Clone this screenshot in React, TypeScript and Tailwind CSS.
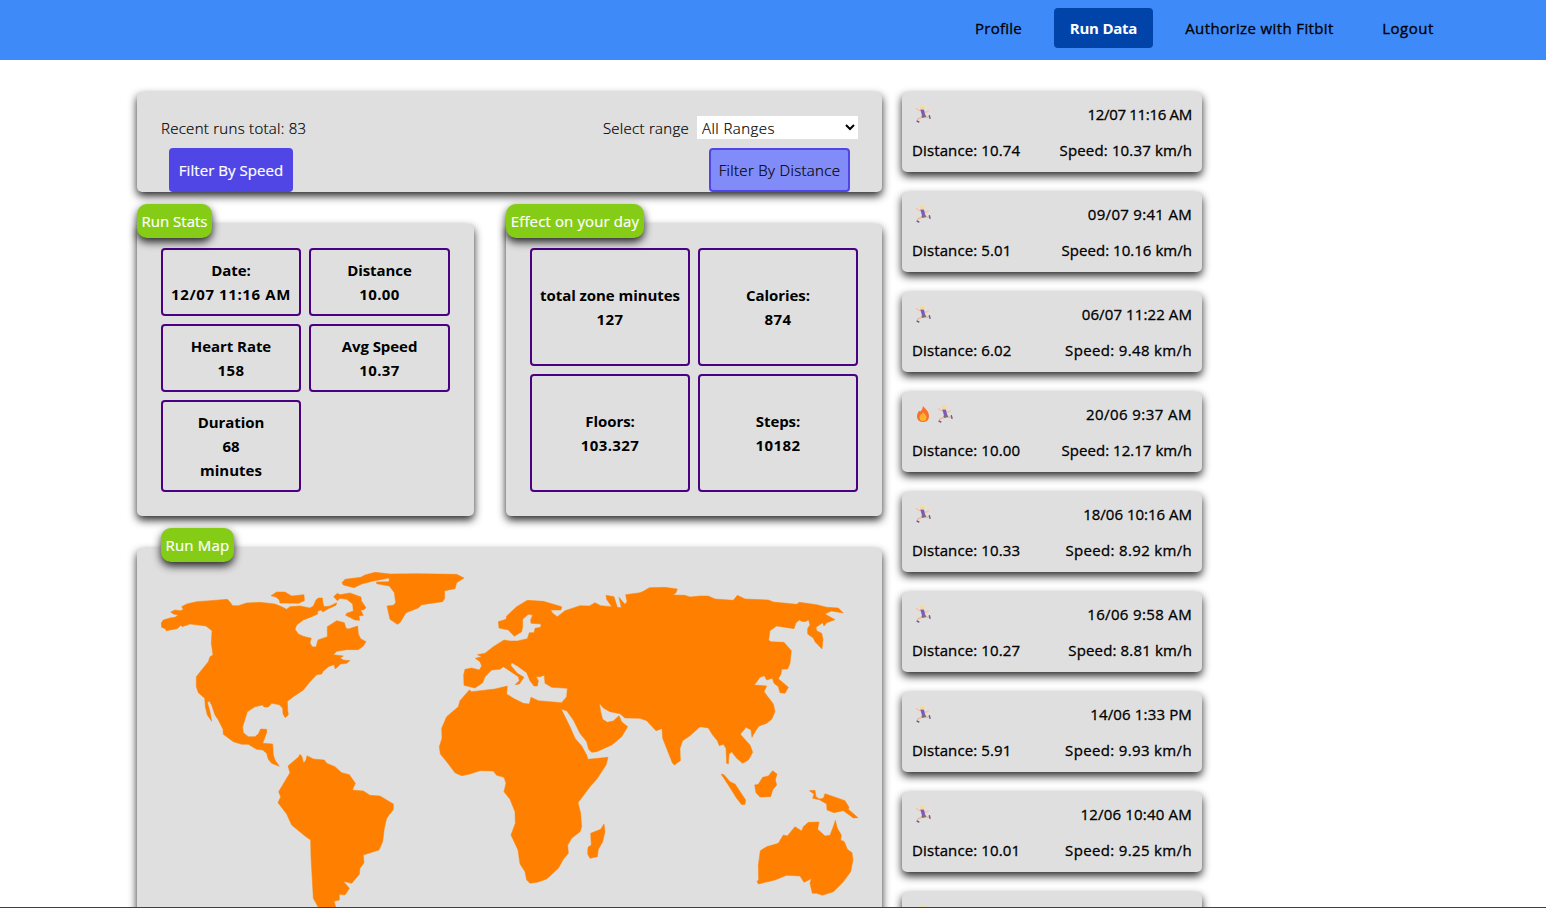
import type { ReactNode } from "react";

const SHADOW = "shadow-[0_4px_8px_rgba(0,0,0,0.85)]";
const MEDIUM = "[-webkit-text-stroke:0.3px_currentColor]";
const SEMILIGHT = "[-webkit-text-stroke:0.2px_currentColor]";

type Run = { date: string; distance: string; speed: string; hot?: boolean; dateTracking: string; speedTracking: string };

const runs: Run[] = [
  { date: "12/07 11:16 AM", distance: "10.74", speed: "10.37", dateTracking: "tracking-[-0.3px]", speedTracking: "tracking-[0.15px]" },
  { date: "09/07 9:41 AM", distance: "5.01", speed: "10.16", dateTracking: "tracking-[0.3px]", speedTracking: "tracking-[0.03px]" },
  { date: "06/07 11:22 AM", distance: "6.02", speed: "9.48", dateTracking: "tracking-[0.1px]", speedTracking: "tracking-[0.35px]" },
  { date: "20/06 9:37 AM", distance: "10.00", speed: "12.17", hot: true, dateTracking: "tracking-[0.45px]", speedTracking: "tracking-[0.03px]" },
  { date: "18/06 10:16 AM", distance: "10.33", speed: "8.92", dateTracking: "tracking-[0px]", speedTracking: "tracking-[0.32px]" },
  { date: "16/06 9:58 AM", distance: "10.27", speed: "8.81", dateTracking: "tracking-[0.35px]", speedTracking: "tracking-[0.15px]" },
  { date: "14/06 1:33 PM", distance: "5.91", speed: "9.93", dateTracking: "tracking-[0.15px]", speedTracking: "tracking-[0.35px]" },
  { date: "12/06 10:40 AM", distance: "10.01", speed: "9.25", dateTracking: "tracking-[0.2px]", speedTracking: "tracking-[0.35px]" },
];

function Runner() {
  return (
    <svg width="22" height="20" viewBox="0 0 22 20" fill="none" strokeLinecap="round" strokeLinejoin="round" aria-hidden="true">
      <path d="M9.2 6.6 L6.4 6.2 L4.6 4.6 M12.4 7.4 L14.2 8.4 L16.4 6.6" stroke="#f0bda0" strokeWidth="1.1" />
      <path d="M13.2 12.4 L15.2 13.4 L17 12.8 M10.6 12.6 L8.8 14 L6 14.6 L5.4 17" stroke="#efb797" strokeWidth="1.4" />
      <path d="M17.4 11.6 L18 14.4 M5 17.2 L6.8 18" stroke="#6b5a96" strokeWidth="1.4" />
      <path d="M8.3 5.6 L11.8 5.2 L13.2 10.8 L10 11.6 Z" fill="#8158b8" />
      <path d="M10 10.9 L13.3 10.4 L14.3 13 L10.6 14 L9.4 12.8 Z" fill="#737373" />
      <circle cx="10.3" cy="3.7" r="1.9" fill="#f7d0b0" />
      <path d="M8 2.4 L10 1.2 L12.4 2 L12.8 4.6 L11.4 5.4 L10.6 3.2 L8.2 3.4 Z" fill="#f5df92" />
    </svg>
  );
}

function Flame() {
  return (
    <svg width="22" height="20" viewBox="0 0 22 20" aria-hidden="true">
      <path d="M10.8 2 C12.4 4 17.2 7 17 12.4 C16.8 16.2 14 18 11 18 C8 18 5.1 16.2 5 12.4 C4.9 10 6.2 8 7.4 6.8 L8.2 7.6 C9.8 6 11 4.6 10.8 2 Z" fill="#f8702c" />
      <path d="M11 8 C11.8 9.4 14.5 10.8 14.5 13.6 C14.5 16.2 12.8 17.2 11 17.2 C9.2 17.2 7.5 16 7.5 13.6 C7.5 12 8.4 11.2 9 10.6 C10 10 10.8 9.2 11 8 Z" fill="#ffb02e" />
    </svg>
  );
}

function WorldMap() {
  return (
    <svg width="697" height="344" viewBox="0 0 697 344" fill="#ff8000" stroke="#ff8000" strokeWidth="1.5" strokeLinejoin="round" className="block" aria-label="World map">
      <g transform="translate(-11 -12) scale(0.33333)">
        <path d="M33 190 40 180 60 174 75 172 85 165 70 162 62 156 75 150 92 152 100 148 95 140 110 132 140 125 180 122 232 118 240 126 248 137 265 137 290 129 330 127 375 132 395 140 410 148 420 140 450 138 480 144 490 138 498 120 505 114 517 114 519 130 522 140 540 138 560 128 558 136 535 146 518 156 514 150 503 153 503 162 485 170 460 180 440 195 435 208 445 222 460 229 484 235 480 248 486 260 498 261 504 240 532 230 532 200 545 192 560 182 583 188 588 205 595 207 623 198 625 222 632 236 648 245 640 258 625 269 590 269 560 274 550 284 580 288 570 294 580 300 600 302 590 310 572 312 556 327 552 314 535 320 518 335 515 342 500 344 480 365 460 390 430 410 412 424 413 450 415 464 406 473 399 462 398 445 388 434 365 430 355 441 342 441 338 435 315 440 292 455 286 475 278 500 280 518 295 530 315 530 325 522 332 507 350 508 350 518 338 550 368 552 370 585 375 600 388 619 365 610 355 598 350 580 338 570 320 568 295 553 275 553 250 545 220 523 219 508 205 480 195 465 185 435 178 424 172 426 180 455 185 484 172 465 166 440 164 415 145 398 139 380 139 350 155 330 175 305 180 290 189 285 184 250 186 212 168 198 120 192 97 200 92 196 82 206 48 212 47 207 35 202Z" />
        <path d="M363 107 380 96 405 96 425 108 462 104 463 122 445 130 390 129 388 120 378 111Z" />
        <path d="M551 110 562 100 570 104 600 99 633 111 634 122 648 143 640 150 632 150 640 166 627 168 629 181 615 180 587 166 590 160 610 153 608 132 590 118 570 115 562 122Z" />
        <path d="M576 68 585 58 632 52 645 45 675 37 720 42 800 41 920 43 942 54 920 68 915 86 884 92 884 115 878 125 815 134 805 144 768 158 750 188 742 193 720 178 711 138 730 136 737 128 733 98 718 78 680 71 680 66 717 65 718 54 670 63 635 72 612 83 580 75Z" />
      </g>
      <g transform="translate(269 -12) scale(0.33333)">
        <path d="M205 185 228 178 230 168 260 140 292 121 340 124 395 140 393 150 362 150 368 160 382 170 405 152 450 137 478 138 495 128 512 137 545 140 530 118 528 106 552 110 562 142 574 143 567 112 585 133 591 125 587 104 630 98 640 94 658 83 705 82 742 87 738 98 730 105 765 106 780 111 810 108 835 108 855 117 910 121 922 106 945 117 1015 120 1030 126 1100 133 1108 127 1160 134 1190 142 1225 144 1240 159 1205 153 1192 158 1185 162 1215 179 1190 188 1182 198 1178 188 1158 202 1160 212 1175 220 1179 238 1176 267 1155 245 1150 234 1133 222 1133 205 1140 195 1136 180 1125 185 1115 184 1108 180 1098 188 1092 206 1040 198 1020 212 1016 240 1022 245 1062 247 1084 272 1080 310 1073 327 1055 328 1053 342 1045 356 1075 382 1065 400 1050 398 1045 380 1032 370 1027 355 1010 360 1003 347 990 352 973 375 1010 378 1002 395 1030 432 1035 455 1025 478 1010 490 987 498 975 515 966 532 963 510 948 502 931 523 960 555 968 577 955 600 938 610 920 595 905 575 897 583 895 612 890 610 888 565 880 553 868 557 862 542 848 525 835 504 810 500 780 527 758 542 750 565 751 602 733 615 727 608 698 535 696 506 678 512 650 482 630 475 585 474 570 461 540 455 520 444 508 430 512 455 518 478 532 487 550 483 567 467 575 485 593 500 575 530 545 555 500 575 485 577 476 568 470 545 450 520 430 480 410 452 394 448 420 500 435 535 455 558 470 585 474 598 534 592 528 615 500 658 480 680 444 728 452 760 455 800 450 815 425 835 413 855 415 880 400 898 385 925 350 957 325 966 300 970 290 960 285 935 270 912 264 870 250 840 243 825 256 790 255 755 240 718 222 695 228 670 222 652 200 646 190 633 150 632 120 642 95 647 75 638 50 605 31 582 28 560 36 535 35 505 50 470 85 440 90 422 118 390 125 395 195 387 232 378 230 402 250 415 280 430 298 432 303 412 325 422 395 428 410 410 412 385 365 382 345 370 343 346 330 350 318 350 325 362 322 378 312 378 300 362 290 338 262 318 245 308 242 316 262 340 282 352 268 372 255 374 268 362 265 350 235 330 220 320 210 328 185 330 165 350 158 368 135 384 102 376 101 345 105 328 125 324 148 330 155 318 150 305 136 295 155 290 142 284 165 280 190 260 222 240 240 243 262 243 292 236 298 218 312 218 315 205 332 202 333 192 303 190 302 180 308 165 295 163 278 178 278 200 275 215 253 229 235 210 207 204Z" />
        <path d="M522 792 525 815 518 845 505 868 502 890 480 895 473 882 474 862 484 855 482 820 512 808Z" />
      </g>
      <g transform="translate(99 168) scale(0.33333)">
        <path d="M84 78 105 60 115 52 120 43 126 50 131 70 138 60 141 47 160 57 193 60 200 70 225 80 245 98 268 104 286 130 277 150 310 153 330 166 360 168 400 192 400 208 380 235 373 265 368 305 357 330 310 345 312 368 300 385 298 403 275 430 250 424 268 445 255 465 238 463 238 480 222 484 228 504 212 528 188 528 176 504 160 475 153 350 152 300 135 288 95 255 80 222 54 188 62 170 56 155 90 98Z" />
      </g>
      <g transform="translate(539 178) scale(0.33333)">
        <path d="M63 72 72 74 90 95 105 102 137 150 135 163 125 164 110 145 85 105Z" />
        <path d="M164 105 175 103 188 82 205 78 218 62 231 72 226 90 230 105 218 120 212 140 180 141 168 128Z" />
        <path d="M328 122 345 121 348 140 358 147 370 145 375 131 410 143 435 152 447 172 445 178 474 203 460 204 430 182 402 188 381 180 380 162 358 149 338 145 342 132Z" />
        <path d="M171 394 176 390 175 345 181 302 200 290 235 280 250 255 262 258 285 230 305 243 310 230 325 217 357 216 353 238 375 258 390 256 400 230 406 211 412 235 424 255 422 270 433 275 442 298 456 308 459 330 452 365 430 395 400 425 367 436 350 430 337 430 330 400 334 386 312 397 300 378 260 376 225 390 175 402Z" />
      </g>
    </svg>
  );
}

function Badge({ children, className }: { children: ReactNode; className: string }) {
  return (
    <span className={`absolute -top-5 flex h-[34px] items-center justify-center whitespace-nowrap rounded-[10px] bg-[#84cc16] text-white ${SEMILIGHT} ${SHADOW} ${className}`}>
      {children}
    </span>
  );
}

function Stat({ label, children }: { label: string; children: ReactNode }) {
  return (
    <div className="flex flex-col items-center justify-center whitespace-nowrap rounded border-2 border-[#4b0082] text-center font-bold">
      <p className="tracking-[-0.06px]">{label}</p>
      {children}
    </div>
  );
}

function Value({ children }: { children: ReactNode }) {
  return <p className="tracking-[0.4px]">{children}</p>;
}

function RunCard({ run }: { run: Run }) {
  return (
    <li className={`flex h-20 shrink-0 flex-col justify-between rounded-[5px] bg-[#dfdfdf] p-2.5 ${MEDIUM} ${SHADOW}`}>
      <div className="flex items-center justify-between">
        <span className="flex">
          {run.hot && <Flame />}
          <Runner />
        </span>
        <span className={run.dateTracking}>{run.date}</span>
      </div>
      <div className="flex justify-between">
        <span className="tracking-[0.12px]">Distance: {run.distance}</span>
        <span className={run.speedTracking}>Speed: {run.speed} km/h</span>
      </div>
    </li>
  );
}

export default function App() {
  return (
    <div className="flex h-[908px] flex-col overflow-hidden border-b border-[#374151] bg-white font-['Open_Sans','Noto_Sans',sans-serif] text-[15px] leading-6 text-black">
      <nav className="flex h-[60px] shrink-0 items-start justify-end gap-4 bg-[#3f8af9] pr-24 pt-2">
        <a className={`flex h-10 w-[79px] items-center justify-center tracking-[0.25px] ${MEDIUM}`}>Profile</a>
        <a className="flex h-10 w-[99px] items-center justify-center rounded bg-[#0043a9] font-bold tracking-[-0.25px] text-white">Run Data</a>
        <a className={`flex h-10 w-[181px] items-center justify-center whitespace-nowrap tracking-[0.38px] ${MEDIUM}`}>Authorize with Fitbit</a>
        <a className={`flex h-10 w-[84px] items-center justify-center tracking-[0.5px] ${MEDIUM}`}>Logout</a>
      </nav>

      <main className="flex min-h-0 flex-1 gap-5 pl-[137px] pt-8">
        <div className="flex w-[745px] flex-col gap-8">
          <section className={`flex h-[100px] shrink-0 flex-col gap-2 rounded-[5px] bg-[#dfdfdf] px-6 pt-6 font-light tracking-[0.28px] ${SEMILIGHT} ${SHADOW}`}>
            <div className="flex h-6 justify-between">
              <p>Recent runs total: 83</p>
              <label className="flex gap-2">
                Select range
                <select className="h-[23px] w-[161px] bg-white pl-px font-light tracking-[0.45px]">
                  <option>All Ranges</option>
                </select>
              </label>
            </div>
            <div className="flex justify-between px-2">
              <button className="h-11 w-[124px] rounded bg-[#4f46e5] font-normal tracking-[0.05px] text-white">Filter By Speed</button>
              <button className="h-11 w-[141px] rounded border-2 border-[#4f46e5] bg-[#818cf8] tracking-[0.33px]">Filter By Distance</button>
            </div>
          </section>

          <div className="flex h-[292px] shrink-0 gap-8">
            <section className={`relative w-[337px] rounded-[5px] bg-[#dfdfdf] p-6 ${SHADOW}`}>
              <Badge className="left-0 w-[75px]">Run Stats</Badge>
              <div className="grid grid-cols-[140px_141px] grid-rows-[68px_68px_92px] gap-2">
                <Stat label="Date:"><p className="tracking-[0.6px]">12/07 11:16 AM</p></Stat>
                <Stat label="Distance"><Value>10.00</Value></Stat>
                <Stat label="Heart Rate"><Value>158</Value></Stat>
                <Stat label="Avg Speed"><Value>10.37</Value></Stat>
                <Stat label="Duration">
                  <p>68</p>
                  <p>minutes</p>
                </Stat>
              </div>
            </section>
            <section className={`relative w-[376px] rounded-[5px] bg-[#dfdfdf] p-6 ${SHADOW}`}>
              <Badge className="left-0 w-[138px] tracking-[0.12px]">Effect on your day</Badge>
              <div className="grid h-full grid-cols-2 grid-rows-2 gap-2">
                <Stat label="total zone minutes"><Value>127</Value></Stat>
                <Stat label="Calories:"><Value>874</Value></Stat>
                <Stat label="Floors:"><Value>103.327</Value></Stat>
                <Stat label="Steps:"><Value>10182</Value></Stat>
              </div>
            </section>
          </div>

          <section className={`relative h-[420px] shrink-0 rounded-[5px] bg-[#dfdfdf] p-6 ${SHADOW}`}>
            <Badge className="left-6 w-[73px] tracking-[0.2px]">Run Map</Badge>
            <WorldMap />
          </section>
        </div>

        <ul className="flex w-[300px] flex-col gap-5">
          {runs.map((run) => (
            <RunCard key={run.date} run={run} />
          ))}
          <li className={`flex h-20 shrink-0 rounded-[5px] bg-[#dfdfdf] px-2.5 pt-3 ${SHADOW}`}>
            <Runner />
          </li>
        </ul>
      </main>
    </div>
  );
}
